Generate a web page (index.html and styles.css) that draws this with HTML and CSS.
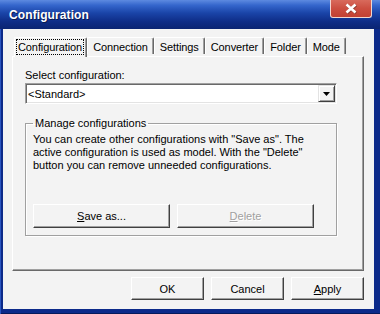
FILE: index.html
```html
<!DOCTYPE html>
<html lang="en">
<head>
	<meta charset="UTF-8">
	<title>Configuration</title>
	<link rel="stylesheet" href="styles.css">
</head>
<body>

	<div class="window">
		<div class="titlebar">
			<span class="title">Configuration</span>
			<button class="close">
				<svg width="14" height="11" viewBox="0 0 14 11">
					<path d="M2.5 1.5 L11.5 9.5 M11.5 1.5 L2.5 9.5" stroke="#8a3a30" stroke-width="3" fill="none" transform="translate(0.6 0.6)"/>
					<path d="M2.5 1.5 L11.5 9.5 M11.5 1.5 L2.5 9.5" stroke="#fff" stroke-width="2.6" fill="none"/>
				</svg>
			</button>
		</div>

		<div class="client">
			<div class="tabs">
				<div class="tab active"><span class="focus">Configuration</span></div>
				<div class="tab">Connection</div>
				<div class="tab">Settings</div>
				<div class="tab">Converter</div>
				<div class="tab">Folder</div>
				<div class="tab">Mode</div>
			</div>

			<div class="panel">
				<div class="label">Select configuration:</div>
				<div class="combo">
					<span class="combo-text">&lt;Standard&gt;</span>
					<span class="combo-btn">
						<svg width="7" height="4" viewBox="0 0 7 4"><path d="M0 0 H7 L3.5 4 Z" fill="#000"/></svg>
					</span>
				</div>

				<fieldset class="group">
					<legend>Manage configurations</legend>
					<p class="info">You can create other configurations with "Save as". The<br>active configuration is used as model. With the "Delete"<br>button you can remove unneeded configurations.</p>
					<div class="group-buttons">
						<button class="btn wide"><u>S</u>ave as...</button>
						<button class="btn wide" disabled><u>D</u>elete</button>
					</div>
				</fieldset>
			</div>

			<div class="actions">
				<button class="btn">OK</button>
				<button class="btn">Cancel</button>
				<button class="btn"><u>A</u>pply</button>
			</div>
		</div>
	</div>

</body>
</html>
```

FILE: styles.css
```css
body {
	margin: 0;
	font-family: "Liberation Sans", Arial, sans-serif;
	font-size: 11px;
	color: #000;
}
.window {
	width: 380px;
	height: 314px;
	box-sizing: border-box;
	padding-bottom: 5px;
	display: flex;
	flex-direction: column;
	background: #0c2a8a;
	box-shadow: inset 1px 0 #2a55c0, inset 0 -1px #061a5c;
}
.titlebar {
	height: 29px;
	flex: none;
	display: flex;
	justify-content: space-between;
	align-items: center;
	padding: 0 8px 0 9px;
	background: linear-gradient(to bottom, #5d8ae0 0%, #3566cc 18%, #1a44a8 45%, #0e2c86 75%, #0a2472 100%);
}
.title {
	color: #fff;
	font-weight: bold;
	font-size: 12px;
	letter-spacing: 0.1px;
	text-shadow: 1px 1px #0a1a50;
}
.close {
	align-self: flex-start;
	width: 42px;
	height: 18px;
	padding: 0;
	display: flex;
	justify-content: center;
	align-items: center;
	border: 1px solid #f2d6cf;
	border-top: none;
	border-radius: 0 0 3px 3px;
	background: linear-gradient(to bottom, #d86a5c 0%, #cc4e40 50%, #c24032 100%);
}
.client {
	flex: 1;
	margin: 0 6px 0 3px;
	padding: 8px 10px 0 9px;
	background: #f3f3f3;
}
.tabs {
	display: flex;
	align-items: flex-end;
	height: 20px;
	padding-left: 2px;
}
.tab {
	height: 17px;
	box-sizing: border-box;
	margin-bottom: 3px;
	padding: 3px 5px 0 5px;
	line-height: 13px;
	letter-spacing: -0.1px;
	border: 1px solid;
	border-color: #fff #696969 transparent #fff;
	border-bottom: none;
	border-radius: 2px 2px 0 0;
	box-shadow: inset -1px 0 #a0a0a0;
	white-space: nowrap;
}
.tab.active {
	position: relative;
	z-index: 1;
	height: 20px;
	margin-bottom: 0;
	padding: 2px 3px 0 2px;
	background: #f3f3f3;
}
.focus {
	display: inline-block;
	padding: 0 1px;
	line-height: 14px;
	outline: 1px dotted #000;
}
.panel {
	height: 215px;
	box-sizing: border-box;
	margin-top: -1px;
	padding: 12px 0 0 12px;
	border: 1px solid;
	border-color: #fff #696969 #696969 #fff;
	box-shadow: inset -1px -1px #a0a0a0;
}
.label {
	line-height: 13px;
}
.combo {
	width: 312px;
	height: 21px;
	box-sizing: border-box;
	margin-top: 1px;
	padding: 1px;
	display: flex;
	align-items: center;
	background: #fff;
	border: 1px solid;
	border-color: #a0a0a0 #fff #fff #a0a0a0;
	box-shadow: inset 1px 1px #696969, inset -1px -1px #e3e3e3;
}
.combo-text {
	padding-left: 1px;
}
.combo-btn {
	margin-left: auto;
	width: 17px;
	height: 17px;
	box-sizing: border-box;
	display: flex;
	justify-content: center;
	align-items: center;
	background: #f3f3f3;
	border: 1px solid;
	border-color: #e3e3e3 #404040 #404040 #e3e3e3;
	box-shadow: inset 1px 1px #fff, inset -1px -1px #a0a0a0;
}
.group {
	width: 312px;
	height: 119px;
	box-sizing: border-box;
	margin: 13px 0 0 0;
	padding: 0 7px 7px 7px;
	border: 1px solid #a0a0a0;
	box-shadow: 1px 1px #fff, inset 1px 1px #fff;
}
.group legend {
	padding: 0 2px;
	line-height: 13px;
}
.info {
	margin: 3px 0 0 0;
	line-height: 13px;
}
.group-buttons {
	display: flex;
	gap: 7px;
	margin-top: 32px;
}
.btn {
	width: 73px;
	height: 23px;
	padding: 0;
	font: inherit;
	color: #000;
	background: #f3f3f3;
	border: 1px solid;
	border-color: #fff #404040 #404040 #fff;
	box-shadow: inset -1px -1px #a0a0a0;
}
.btn.wide {
	width: 137px;
	height: 24px;
}
.btn:disabled {
	color: #a0a0a0;
	text-shadow: 1px 1px #fff;
}
.actions {
	display: flex;
	justify-content: flex-end;
	gap: 7px;
	margin-top: 6px;
}
```
